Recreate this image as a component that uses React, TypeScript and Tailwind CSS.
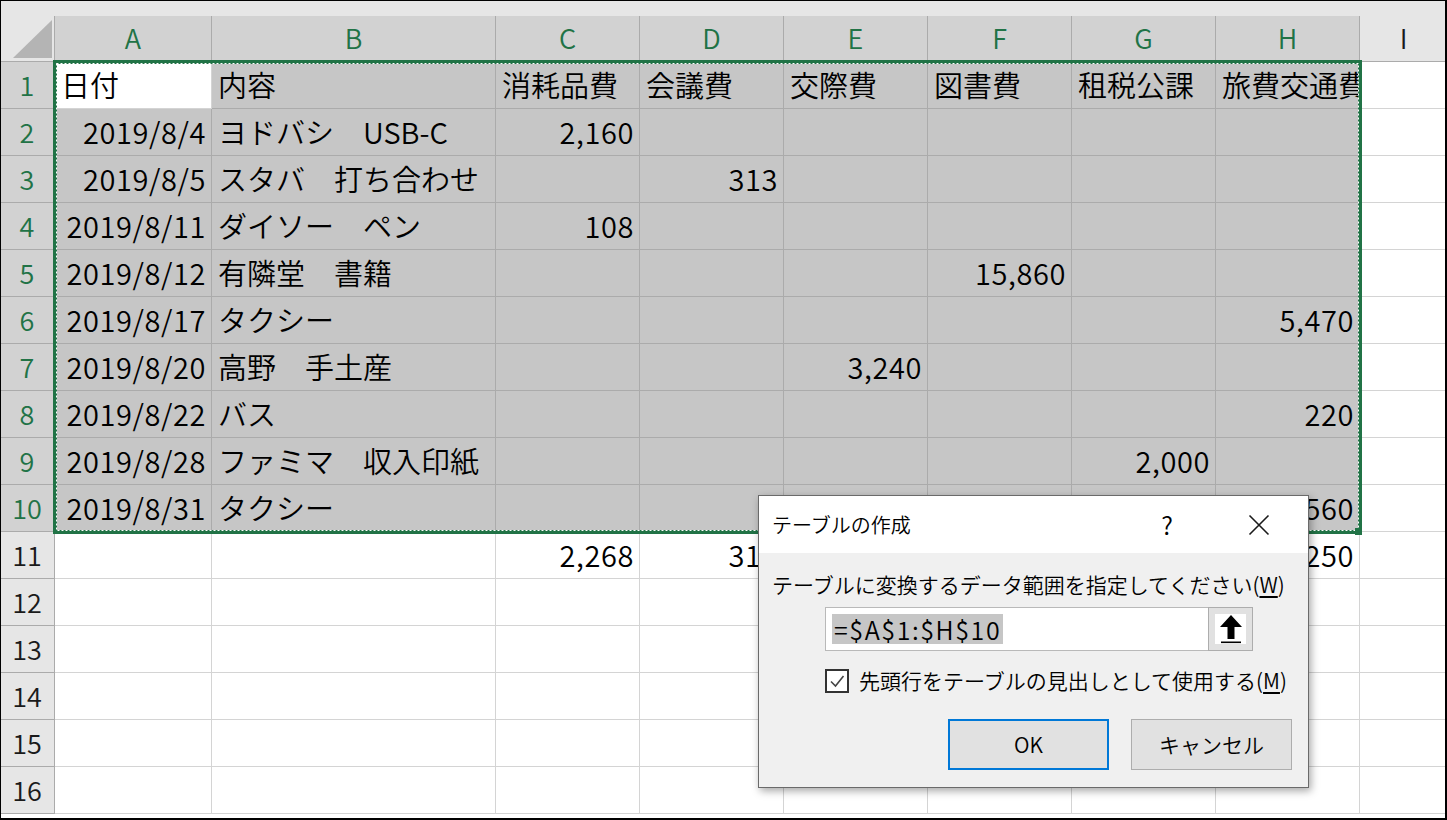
import React from "react";

const COL_WIDTHS = ["w-[157px]", "w-[284px]", "w-[144px]", "w-[144px]", "w-[144px]", "w-[144px]", "w-[144px]", "w-[144px]"];
const COL_LETTERS = ["A", "B", "C", "D", "E", "F", "G", "H"];

type Cell = { v: string; right?: boolean };

const t = (v: string): Cell => ({ v });
const n = (v: string): Cell => ({ v, right: true });
const e: Cell = { v: "" };

const ROWS: Cell[][] = [
  [t("日付"), t("内容"), t("消耗品費"), t("会議費"), t("交際費"), t("図書費"), t("租税公課"), t("旅費交通費")],
  [n("2019/8/4"), t("ヨドバシ　USB-C"), n("2,160"), e, e, e, e, e],
  [n("2019/8/5"), t("スタバ　打ち合わせ"), e, n("313"), e, e, e, e],
  [n("2019/8/11"), t("ダイソー　ペン"), n("108"), e, e, e, e, e],
  [n("2019/8/12"), t("有隣堂　書籍"), e, e, e, n("15,860"), e, e],
  [n("2019/8/17"), t("タクシー"), e, e, e, e, e, n("5,470")],
  [n("2019/8/20"), t("高野　手土産"), e, e, n("3,240"), e, e, e],
  [n("2019/8/22"), t("バス"), e, e, e, e, e, n("220")],
  [n("2019/8/28"), t("ファミマ　収入印紙"), e, e, e, e, n("2,000"), e],
  [n("2019/8/31"), t("タクシー"), e, e, e, e, e, n("5,560")],
  [e, e, n("2,268"), n("313"), n("3,240"), n("15,860"), n("2,000"), n("11,250")],
  [e, e, e, e, e, e, e, e],
  [e, e, e, e, e, e, e, e],
  [e, e, e, e, e, e, e, e],
  [e, e, e, e, e, e, e, e],
  [e, e, e, e, e, e, e, e],
];

function ColumnHeaders() {
  return (
    <div className="flex h-[46px] border-b border-[#ababab]">
      <div className="relative w-[55px] shrink-0 border-r border-[#ababab] bg-[#e6e6e6]">
        <svg className="absolute left-0 top-[-16px]" width="55" height="62" viewBox="0 0 55 62">
          <polygon points="13,58 52,20 52,58" fill="#b4b4b4" />
        </svg>
      </div>
      {COL_LETTERS.map((c, i) => (
        <div
          key={c}
          className={`${COL_WIDTHS[i]} shrink-0 border-r border-[#ababab] bg-[#d2d2d2] flex items-center justify-center text-[27px] text-[#217346]`}
        >
          {c}
        </div>
      ))}
      <div className="flex-1 bg-[#e6e6e6] flex items-center justify-center text-[27px] text-[#1a1a1a]">I</div>
    </div>
  );
}

function GridRow({ cells, index }: { cells: Cell[]; index: number }) {
  const inSel = index < 10;
  return (
    <div className="flex h-[47px]">
      <div
        className={`w-[55px] shrink-0 border-r border-b border-[#ababab] flex items-center justify-center text-[27px] ${
          inSel ? "bg-[#d2d2d2] text-[#217346]" : "bg-[#e6e6e6] text-[#1a1a1a]"
        }`}
      >
        {index + 1}
      </div>
      {cells.map((c, i) => {
        const active = index === 0 && i === 0;
        const shade = inSel && !active;
        return (
          <div
            key={i}
            className={`${COL_WIDTHS[i]} shrink-0 overflow-hidden whitespace-nowrap border-r border-b flex items-center text-[29px] text-black ${
              c.right ? "justify-end pr-[5px] tracking-[0.6px]" : "justify-start pl-[6px]"
            } ${shade ? "bg-[#c6c6c6] border-[#ababab]" : "bg-white border-[#d4d4d4]"}`}
          >
            {c.v}
          </div>
        );
      })}
      <div className="flex-1 border-b border-[#d4d4d4] bg-white" />
    </div>
  );
}

function CopyMarquee() {
  return (
    <>
      <svg className="absolute left-[53px] top-[60px] pointer-events-none" width="1309" height="474" viewBox="0 0 1309 474">
        <rect x="2" y="2" width="1305" height="470" fill="none" stroke="#217346" strokeWidth="4" />
        <rect x="3.5" y="3.5" width="1302" height="467" fill="none" stroke="#ffffff" strokeWidth="1" strokeDasharray="2 2" />
      </svg>
      <div className="absolute left-[1355px] top-[528px] w-[7px] h-[7px] bg-[#217346]" />
    </>
  );
}

function CreateTableDialog() {
  return (
    <div className="absolute left-[758px] top-[495px] w-[551px] h-[293px] border border-[#6a6a6a] bg-[#f0f0f0] shadow-[2px_3px_8px_rgba(0,0,0,0.35)] flex flex-col text-[21px] text-black">
      <div className="h-[57px] bg-white flex items-center pl-[13px]">
        <div className="flex-1 text-[20px]">テーブルの作成</div>
        <div className="w-[44px] text-center text-[25px] leading-none">?</div>
        <div className="ml-[47px] w-[46px] flex justify-center">
          <svg width="22" height="22" viewBox="0 0 22 22">
            <path d="M1.5 1.5 L20.5 20.5 M20.5 1.5 L1.5 20.5" stroke="#1a1a1a" strokeWidth="1.6" fill="none" />
          </svg>
        </div>
        <div className="w-[26px]" />
      </div>
      <div className="flex-1 flex flex-col">
        <div className="pl-[13px] pt-[17px] leading-[28px] whitespace-nowrap">
          テーブルに変換するデータ範囲を指定してください(<span className="underline underline-offset-[3px]">W</span>)
        </div>
        <div className="ml-[66px] mt-[9px] w-[428px] h-[44px] flex">
          <div className="flex-1 bg-white border border-r-0 border-[#b9b9b9] flex items-center pl-[6px]">
            <span className="bg-[#c6c6c6] h-[30px] leading-[30px] text-[25px] tracking-[1.6px] px-[2px]">=$A$1:$H$10</span>
          </div>
          <div className="w-[45px] h-[44px] bg-[#e1e1e1] border border-[#adadad] flex items-center justify-center">
            <div className="w-[31px] h-[30px] bg-white flex items-center justify-center">
              <svg width="24" height="30" viewBox="0 0 24 30">
                <polygon points="12,1 23,13 15.5,13 15.5,25 8.5,25 8.5,13 1,13" fill="#000" />
                <rect x="2" y="27.5" width="20" height="1.6" fill="#000" />
              </svg>
            </div>
          </div>
        </div>
        <div className="ml-[66px] mt-[18px] flex items-center h-[24px]">
          <div className="w-[24px] h-[24px] border-2 border-[#333333] bg-white flex items-center justify-center">
            <svg width="18" height="18" viewBox="0 0 18 18">
              <path d="M3 9.5 L7.5 14 L15.5 4" stroke="#444" strokeWidth="1.6" fill="none" />
            </svg>
          </div>
          <div className="ml-[10px] whitespace-nowrap">
            先頭行をテーブルの見出しとして使用する(<span className="underline underline-offset-[3px]">M</span>)
          </div>
        </div>
        <div className="mt-[26px] flex justify-end pr-[16px] gap-[22px]">
          <div className="w-[161px] h-[51px] border-2 border-[#0078d7] bg-[#e1e1e1] flex items-center justify-center">OK</div>
          <div className="w-[161px] h-[51px] border border-[#adadad] bg-[#e1e1e1] flex items-center justify-center">キャンセル</div>
        </div>
      </div>
    </div>
  );
}

export default function App() {
  return (
    <div className="relative w-[1447px] h-[820px] overflow-hidden bg-white font-[350] font-['Noto_Sans_CJK_JP','Noto_Sans',sans-serif]">
      <div className="h-[16px] bg-[#e6e6e6]" />
      <ColumnHeaders />
      {ROWS.map((r, i) => (
        <GridRow key={i} cells={r} index={i} />
      ))}
      <CopyMarquee />
      <CreateTableDialog />
      <div className="absolute inset-0 border-t border-l border-r-2 border-b-2 border-black pointer-events-none" />
    </div>
  );
}
